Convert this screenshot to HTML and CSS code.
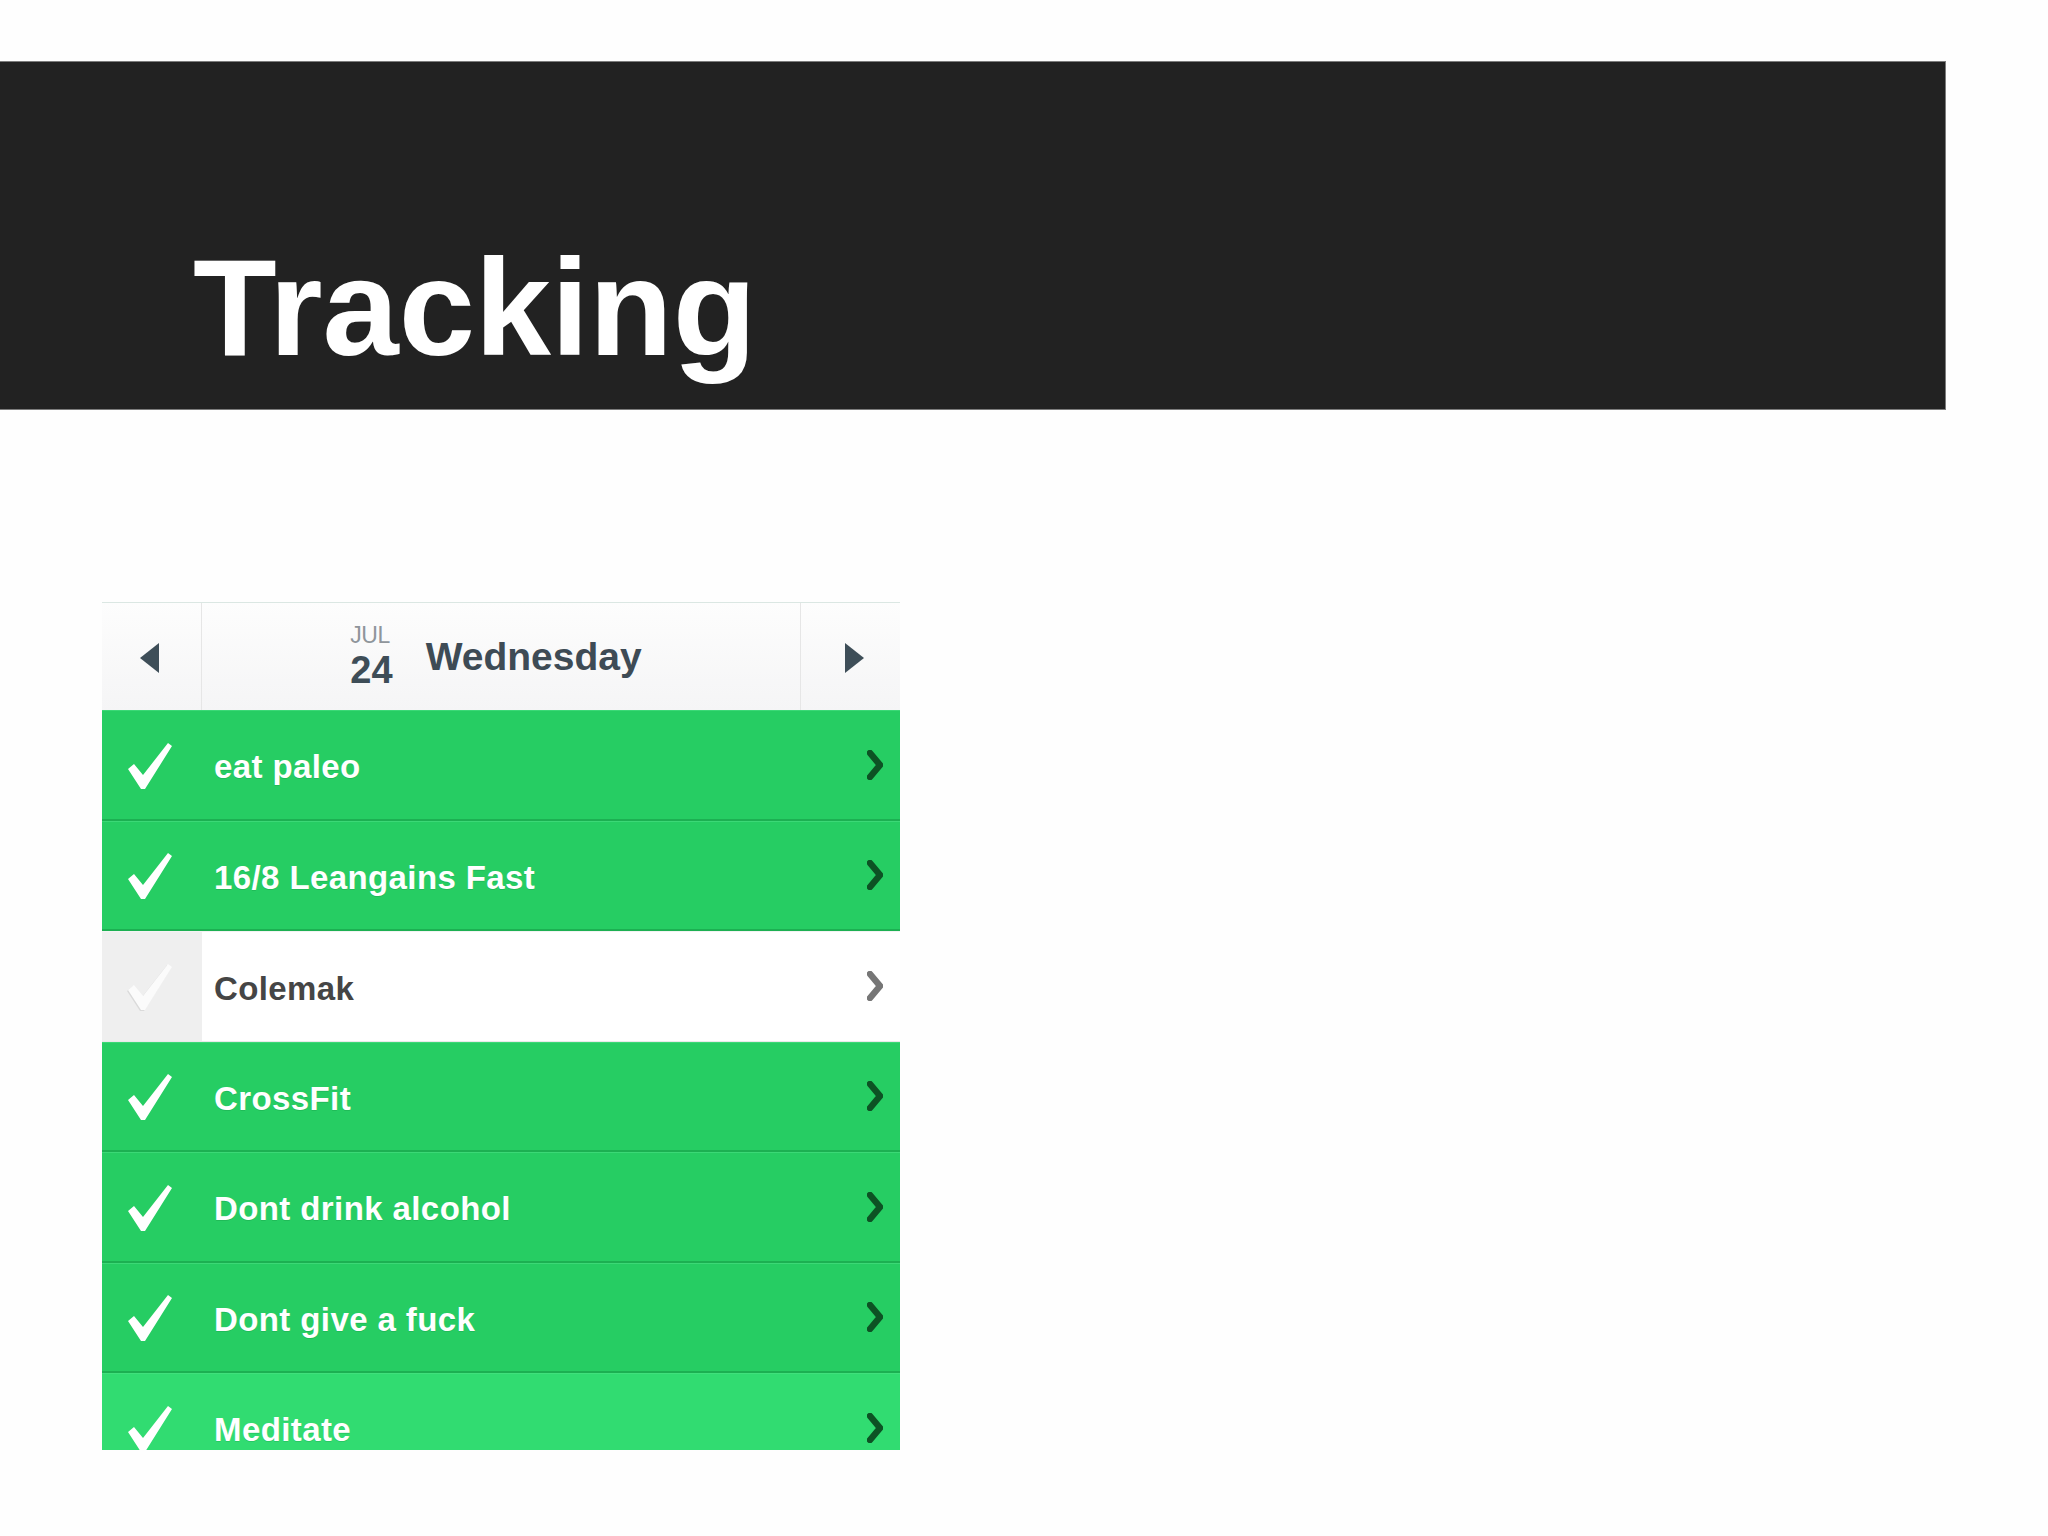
FILE: index.html
```html
<!DOCTYPE html>
<html lang="en">
<head>
<meta charset="utf-8">
<title>Tracking</title>
<link rel="stylesheet" href="styles.css">
</head>
<body>
<header class="slide-header">
  <h1 class="title">Tracking</h1>
</header>

<section class="tracker">
  <div class="day-nav">
    <div class="nav-btn">
      <svg class="tri" width="19" height="30" viewBox="0 0 19 30"><polygon points="19,0 19,30 0,15" fill="#3e4e58"/></svg>
    </div>
    <div class="day">
      <div class="date">
        <span class="month">JUL</span>
        <span class="daynum">24</span>
      </div>
      <span class="weekday">Wednesday</span>
    </div>
    <div class="nav-btn nav-btn--next">
      <svg class="tri" width="19" height="30" viewBox="0 0 19 30"><polygon points="0,0 19,15 0,30" fill="#3e4e58"/></svg>
    </div>
  </div>

  <ul class="habits">
    <li class="habit habit--done">
      <span class="check"><svg width="44" height="46" viewBox="0 0 44 46"><path d="M0 26 L6 21 L15 32 L40 0 L44 3 L17 46 L13 46 Z"/></svg></span>
      <span class="name">eat paleo</span>
      <span class="chev"><svg width="16" height="30" viewBox="0 0 16 30"><polyline points="3,3 13,15 3,27"/></svg></span>
    </li>
    <li class="habit habit--done">
      <span class="check"><svg width="44" height="46" viewBox="0 0 44 46"><path d="M0 26 L6 21 L15 32 L40 0 L44 3 L17 46 L13 46 Z"/></svg></span>
      <span class="name">16/8 Leangains Fast</span>
      <span class="chev"><svg width="16" height="30" viewBox="0 0 16 30"><polyline points="3,3 13,15 3,27"/></svg></span>
    </li>
    <li class="habit habit--todo">
      <span class="check"><svg width="44" height="46" viewBox="0 0 44 46"><path d="M0 26 L6 21 L15 32 L40 0 L44 3 L17 46 L13 46 Z"/></svg></span>
      <span class="name">Colemak</span>
      <span class="chev"><svg width="16" height="30" viewBox="0 0 16 30"><polyline points="3,3 13,15 3,27"/></svg></span>
    </li>
    <li class="habit habit--done">
      <span class="check"><svg width="44" height="46" viewBox="0 0 44 46"><path d="M0 26 L6 21 L15 32 L40 0 L44 3 L17 46 L13 46 Z"/></svg></span>
      <span class="name">CrossFit</span>
      <span class="chev"><svg width="16" height="30" viewBox="0 0 16 30"><polyline points="3,3 13,15 3,27"/></svg></span>
    </li>
    <li class="habit habit--done">
      <span class="check"><svg width="44" height="46" viewBox="0 0 44 46"><path d="M0 26 L6 21 L15 32 L40 0 L44 3 L17 46 L13 46 Z"/></svg></span>
      <span class="name">Dont drink alcohol</span>
      <span class="chev"><svg width="16" height="30" viewBox="0 0 16 30"><polyline points="3,3 13,15 3,27"/></svg></span>
    </li>
    <li class="habit habit--done">
      <span class="check"><svg width="44" height="46" viewBox="0 0 44 46"><path d="M0 26 L6 21 L15 32 L40 0 L44 3 L17 46 L13 46 Z"/></svg></span>
      <span class="name">Dont give a fuck</span>
      <span class="chev"><svg width="16" height="30" viewBox="0 0 16 30"><polyline points="3,3 13,15 3,27"/></svg></span>
    </li>
    <li class="habit habit--done habit--active">
      <span class="check"><svg width="44" height="46" viewBox="0 0 44 46"><path d="M0 26 L6 21 L15 32 L40 0 L44 3 L17 46 L13 46 Z"/></svg></span>
      <span class="name">Meditate</span>
      <span class="chev"><svg width="16" height="30" viewBox="0 0 16 30"><polyline points="3,3 13,15 3,27"/></svg></span>
    </li>
  </ul>
</section>
</body>
</html>
```

FILE: styles.css
```css
html, body {
  margin: 0;
  padding: 0;
  background: #fefefe;
  font-family: "Liberation Sans", Arial, sans-serif;
}

.slide-header {
  box-sizing: border-box;
  margin-top: 61px;
  width: 1946px;
  height: 349px;
  background: #222222;
  border: 1px solid #7c7c7c;
  border-left: none;
  padding: 177px 0 0 193px;
}

.title {
  margin: 0;
  color: #ffffff;
  font-size: 137px;
  font-weight: bold;
  line-height: 1;
  letter-spacing: 0;
}

.tracker {
  box-sizing: border-box;
  margin: 192px 0 0 102px;
  width: 798px;
  height: 848px;
  overflow: hidden;
  border-top: 1px solid #dbe7e3;
}

.day-nav {
  display: flex;
  height: 107px;
  background: linear-gradient(#fdfdfd, #f5f5f6);
}

.nav-btn {
  width: 99px;
  display: flex;
  align-items: center;
  justify-content: center;
  border-right: 1px solid #e6e6e6;
}

.nav-btn .tri {
  margin-top: 2px;
  margin-right: 5px;
}

.nav-btn--next {
  border-right: none;
  border-left: 1px solid #e6e6e6;
}

.nav-btn--next .tri {
  margin-right: 0;
  margin-left: 8px;
}

.day {
  flex: 1;
  display: flex;
  align-items: center;
  justify-content: center;
  gap: 33px;
  padding-right: 10px;
}

.date {
  display: flex;
  flex-direction: column;
  align-items: flex-start;
}

.month {
  font-size: 23px;
  line-height: 22px;
  color: #8f959b;
  letter-spacing: -0.5px;
}

.daynum {
  margin-top: 6px;
  font-size: 38px;
  line-height: 37px;
  font-weight: bold;
  color: #3e4d57;
}

.weekday {
  font-size: 39px;
  line-height: 38px;
  font-weight: bold;
  color: #3e4b55;
  letter-spacing: 0;
}

.habits {
  list-style: none;
  margin: 0;
  padding: 0;
}

.habit {
  box-sizing: border-box;
  display: flex;
  align-items: stretch;
  height: 110.5px;
}

.habit--done {
  background: #26cd63;
  border-top: 1px solid #3bd876;
  border-bottom: 2px solid #1cb052;
}

.habit--active {
  background: #31dc71;
  border-top: 1px solid #40e07c;
}

.habit--todo {
  background: #ffffff;
  border-top: 1px solid #f3f3f3;
  border-bottom: 1px solid #e9e9e9;
}

.check {
  width: 100px;
  display: flex;
  align-items: center;
  justify-content: center;
}

.check svg {
  margin-left: -4px;
  margin-top: 2px;
}

.habit--done .check path {
  fill: #ffffff;
}

.habit--todo .check {
  background: #efefef;
}

.habit--todo .check path {
  fill: #fbfbfb;
}

.habit--todo .check svg {
  filter: drop-shadow(-1px 1px 0 #dadada);
}

.name {
  flex: 1;
  display: flex;
  align-items: center;
  padding: 5px 0 0 12px;
  font-size: 33px;
  font-weight: bold;
  letter-spacing: 0.4px;
}

.habit--done .name {
  color: #ffffff;
  text-shadow: 0 1px 0 rgba(0, 90, 30, 0.18);
}

.habit--todo .name {
  color: #454545;
}

.chev {
  width: 16px;
  margin-right: 17px;
  display: flex;
  align-items: center;
}

.chev polyline {
  fill: none;
  stroke-width: 6.5;
  stroke-linecap: round;
  stroke-linejoin: miter;
}

.habit--done .chev polyline {
  stroke: #0d5224;
}

.habit--todo .chev polyline {
  stroke: #767676;
}
```
